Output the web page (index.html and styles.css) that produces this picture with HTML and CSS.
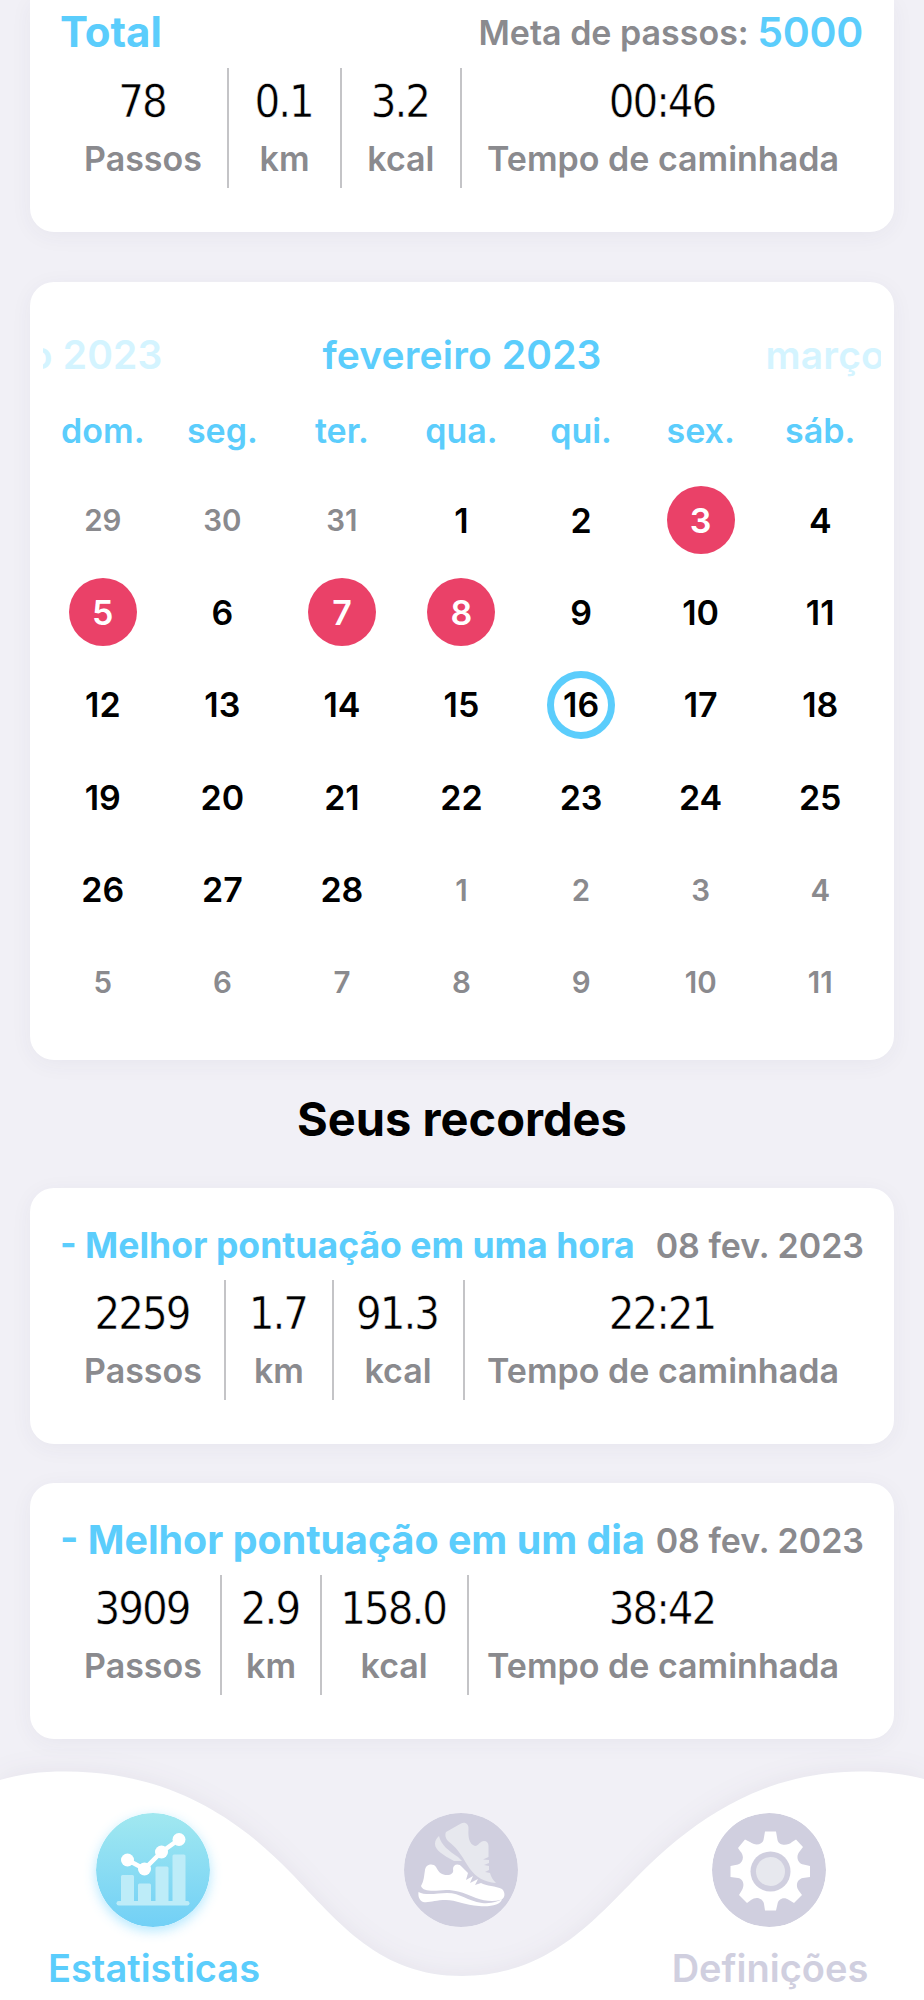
FILE: index.html
```html
<!DOCTYPE html>
<html lang="pt">
<head>
    <meta charset="UTF-8">
    <meta name="viewport" content="width=device-width, initial-scale=1.0">
    <title>Estatisticas</title>
    <link rel="stylesheet" href="styles.css">
</head>
<body>
    <main class="content">
        <section class="card total-card">
            <div class="card-header">
                <h2 class="card-title total-title">Total</h2>
                <p class="goal"><span class="goal-label">Meta de passos:</span> <span class="goal-value">5000</span></p>
            </div>
            <div class="stats">
                <div class="stat"><span class="value">78</span><span class="label">Passos</span></div>
                <div class="divider"></div>
                <div class="stat"><span class="value">0.1</span><span class="label">km</span></div>
                <div class="divider"></div>
                <div class="stat"><span class="value">3.2</span><span class="label">kcal</span></div>
                <div class="divider"></div>
                <div class="stat"><span class="value">00:46</span><span class="label">Tempo de caminhada</span></div>
            </div>
        </section>

        <section class="card calendar">
            <div class="months">
                <span class="month side prev">janeiro 2023</span>
                <span class="month">fevereiro 2023</span>
                <span class="month side next">março 2023</span>
            </div>
            <div class="weekdays">
                <span>dom.</span><span>seg.</span><span>ter.</span><span>qua.</span><span>qui.</span><span>sex.</span><span>sáb.</span>
            </div>
            <div class="days">
                <span class="day out">29</span><span class="day out">30</span><span class="day out">31</span><span class="day">1</span><span class="day">2</span><span class="day marked">3</span><span class="day">4</span>
                <span class="day marked">5</span><span class="day">6</span><span class="day marked">7</span><span class="day marked">8</span><span class="day">9</span><span class="day">10</span><span class="day">11</span>
                <span class="day">12</span><span class="day">13</span><span class="day">14</span><span class="day">15</span><span class="day today">16</span><span class="day">17</span><span class="day">18</span>
                <span class="day">19</span><span class="day">20</span><span class="day">21</span><span class="day">22</span><span class="day">23</span><span class="day">24</span><span class="day">25</span>
                <span class="day">26</span><span class="day">27</span><span class="day">28</span><span class="day out">1</span><span class="day out">2</span><span class="day out">3</span><span class="day out">4</span>
                <span class="day out">5</span><span class="day out">6</span><span class="day out">7</span><span class="day out">8</span><span class="day out">9</span><span class="day out">10</span><span class="day out">11</span>
            </div>
        </section>

        <h1 class="records-heading">Seus recordes</h1>

        <section class="card record-card">
            <div class="card-header">
                <h2 class="card-title hour-title">- Melhor pontuação em uma hora</h2>
                <span class="date">08 fev. 2023</span>
            </div>
            <div class="stats">
                <div class="stat"><span class="value">2259</span><span class="label">Passos</span></div>
                <div class="divider"></div>
                <div class="stat"><span class="value">1.7</span><span class="label">km</span></div>
                <div class="divider"></div>
                <div class="stat"><span class="value">91.3</span><span class="label">kcal</span></div>
                <div class="divider"></div>
                <div class="stat"><span class="value">22:21</span><span class="label">Tempo de caminhada</span></div>
            </div>
        </section>

        <section class="card record-card">
            <div class="card-header">
                <h2 class="card-title day-title">- Melhor pontuação em um dia</h2>
                <span class="date">08 fev. 2023</span>
            </div>
            <div class="stats">
                <div class="stat"><span class="value">3909</span><span class="label">Passos</span></div>
                <div class="divider"></div>
                <div class="stat"><span class="value">2.9</span><span class="label">km</span></div>
                <div class="divider"></div>
                <div class="stat"><span class="value">158.0</span><span class="label">kcal</span></div>
                <div class="divider"></div>
                <div class="stat"><span class="value">38:42</span><span class="label">Tempo de caminhada</span></div>
            </div>
        </section>
    </main>

    <nav class="tab-bar">
        <svg class="wave" viewBox="0 1760 924 240" width="924" height="240">
            <path fill="#fff" d="M0 1780C20 1774 40 1771.5 66 1771.5C170 1771.5 240 1820 290 1872C340 1924 380 1976 462 1976C544 1976 590 1925 632 1882C690 1822 760 1771.5 860 1771.5C885 1771.5 905 1774 924 1779V2000H0Z"/>
        </svg>
        <a class="tab active">
            <svg class="tab-icon" viewBox="0 0 114 114">
                <defs>
                    <linearGradient id="sky" x1="0" y1="0" x2="0" y2="1">
                        <stop offset="0" stop-color="#a1e8f0"/>
                        <stop offset="1" stop-color="#72d0f6"/>
                    </linearGradient>
                </defs>
                <circle cx="57" cy="57" r="57" fill="url(#sky)"/>
                <g fill="#bdecf8">
                    <rect x="25" y="62" width="13" height="28" rx="1.5"/>
                    <rect x="42" y="70.5" width="13" height="20" rx="1.5"/>
                    <rect x="59.5" y="53.5" width="13" height="37" rx="1.5"/>
                    <rect x="76.5" y="41.5" width="13" height="49" rx="1.5"/>
                    <rect x="20.5" y="88" width="73" height="4.5" rx="2.2"/>
                </g>
                <path d="M31.5 47L48.5 56L65.5 39L83 26.5" fill="none" stroke="#fff" stroke-width="4.5"/>
                <g fill="#fff">
                    <circle cx="31.5" cy="47" r="6.5"/>
                    <circle cx="48.5" cy="56" r="6.5"/>
                    <circle cx="65.5" cy="39" r="6.5"/>
                    <circle cx="83" cy="26.5" r="6.5"/>
                </g>
            </svg>
            <span class="tab-label">Estatisticas</span>
        </a>
        <a class="tab">
            <svg class="tab-icon" viewBox="0 0 114 114">
                <circle cx="57" cy="57" r="57" fill="#d0cfdf"/>
                <g fill="#e7e8ee">
                    <path d="M42 19L57 10.5C61 8.5 65 11 64.5 16C64 24 65 31 71 33C75 32.5 76 28 80 28C83 28 84.5 30 84.5 33V44L79 46.5L85 47V50L80 52L85 53V57L81 59L86 60C87 64 89 67 92 70C80 69 72 64 66 56C59 46 56 37 44 28C41 25 41 21 42 19Z"/>
                    <path d="M35 23C37 32 45 38 54 44L58 48L50 48C39 42 31 37 31 31C31 27 33 25 35 23Z"/>
                </g>
                <g fill="#fff">
                    <path d="M17 73C20 68 20 63 21 57C22 51 29 50 32 54C35 60 38 62 43 62C47 62 50 60 49 56C49 51 55 50 58 54L64 60L62 67L69 63L66 70L74 66L71 72L77 70C82 73 92 73 98 76C102 80 101 86 96 87C89 89 80 88 72 85C58 79 51 77 42 77C30 78 19 79 17 73Z"/>
                    <path d="M14.5 79C22 83 34 80 43 80C57 80 63 88 78 90C88 91 95 88 98 86C97 92 86 94 75 93C61 92 52 87 42 87C31 87 26 90 19 89C15 87 14 83 14.5 79Z"/>
                </g>
            </svg>
        </a>
        <a class="tab">
            <svg class="tab-icon" viewBox="0 0 114 114">
                <circle cx="57" cy="57" r="57" fill="#d0cfdf"/>
                <path fill="#fff" d="M53 18.5H64L65.5 27C67 33 76 33 80 29L84 26.5L91 34L88 38C83 43 86 51 91.5 51.5L98 53V64L91 65C85 66 83 73 87 78L90 82L82 90L77 87C72 83 66 86 65.5 91L64 97.5H53L52 91C51 85 44 83 39 87L35 90L27 82L30 77C33 71 31 66 26 65L18.5 64V53L26 51.5C31 50 33 43 28 38L26 35L33 26.5L38 29C43 33 50 32 51.5 27Z"/>
                <circle cx="58.5" cy="58.5" r="20" fill="#d0cfdf"/>
                <circle cx="58.5" cy="58.5" r="14.5" fill="#e7e8ee"/>
            </svg>
            <span class="tab-label">Definições</span>
        </a>
    </nav>
</body>
</html>
```

FILE: styles.css
```css
/* Basic reset */
* {
    margin: 0;
    padding: 0;
    box-sizing: border-box;
}

body {
    width: 924px;
    height: 2000px;
    overflow: hidden;
    display: flex;
    flex-direction: column;
    font-family: Inter, "Liberation Sans", sans-serif;
    background-color: #f1f0f6;
}

.content {
    flex: 1;
    padding: 0 30px;
}

/* Cards */
.card {
    background-color: #fff;
    border-radius: 24px;
    padding: 0 30px;
    box-shadow: 0 4px 22px rgba(60, 50, 90, 0.05);
}

.card-header {
    display: flex;
    justify-content: space-between;
    align-items: center;
    white-space: nowrap;
}

.card-title {
    color: #5bcdfc;
    font-weight: 700;
}

.total-card {
    height: 232px;
    border-radius: 0 0 24px 24px;
}

.total-card .card-header {
    height: 68px;
    align-items: baseline;
    padding-top: 6px;
}

.total-title {
    font-size: 42px;
}

.goal {
    color: #5bcdfc;
    font-size: 34px;
    font-weight: 600;
    padding-right: 1px;
}

.goal-label {
    color: #8a8a8e;
    vertical-align: 2px;
}

.goal-value {
    font-size: 41px;
    letter-spacing: -0.3px;
}

/* Stats row */
.stats {
    display: flex;
    justify-content: space-between;
    height: 120px;
    padding: 0 25px 0 24px;
}

.stat {
    display: flex;
    flex-direction: column;
    align-items: center;
    white-space: nowrap;
}

.value {
    font-family: "DejaVu Sans Condensed", "DejaVu Sans", sans-serif;
    font-stretch: condensed;
    font-size: 45px;
    line-height: 56px;
    letter-spacing: -2px;
    padding-top: 6px;
    padding-right: 2px;
    -webkit-text-stroke: 0.5px #fff;
}

.label {
    color: #8a8a8e;
    font-size: 34px;
    font-weight: 600;
    line-height: 40px;
    padding-top: 9px;
}

.divider {
    width: 2px;
    background-color: #c4c4c7;
}

/* Calendar */
.calendar {
    height: 778px;
    margin-top: 50px;
    padding: 46px 13px 0;
}

.months {
    display: flex;
    justify-content: center;
    align-items: center;
    gap: 164px;
    height: 52px;
    overflow: hidden;
    white-space: nowrap;
}

.month {
    color: #5bcdfc;
    font-size: 39px;
    font-weight: 600;
    letter-spacing: 0.15px;
}

.side {
    flex: 0 0 260px;
    color: #d4f4ff;
}

.prev {
    margin-right: -4px;
    margin-left: 4px;
    text-align: right;
}

.weekdays,
.days {
    display: grid;
    grid-template-columns: repeat(7, 1fr);
    justify-items: center;
    margin-right: 1px;
}

.weekdays {
    height: 106px;
    padding-top: 30px;
    color: #5bcdfc;
    font-size: 34px;
    font-weight: 600;
}

.days {
    row-gap: 24.4px;
}

.day {
    display: flex;
    justify-content: center;
    align-items: center;
    width: 68px;
    height: 68px;
    border-radius: 50%;
    font-size: 34px;
    font-weight: 600;
}

.out {
    color: #8a8a8e;
    font-size: 29.5px;
}

.marked {
    background-color: #ea4168;
    color: #fff;
}

.today {
    border: 7px solid #5bcdfc;
}

/* Records */
.records-heading {
    height: 128px;
    line-height: 118px;
    font-size: 47px;
    font-weight: 700;
    text-align: center;
}

.record-card {
    height: 256px;
    margin-bottom: 39px;
    padding-top: 22px;
}

.record-card:last-child {
    margin-bottom: 0;
}

.record-card .card-header {
    height: 70px;
}

.hour-title {
    font-size: 35.6px;
}

.day-title {
    font-size: 39.4px;
}

.date {
    color: #8a8a8e;
    font-size: 34px;
    font-weight: 600;
}

/* Bottom tabs */
.tab-bar {
    position: relative;
    display: grid;
    grid-template-columns: repeat(3, 308px);
    height: 240px;
    padding-top: 53px;
}

.wave {
    position: absolute;
    top: 0;
    left: 0;
    filter: drop-shadow(0 -2px 12px rgba(60, 50, 90, 0.06));
}

.tab {
    position: relative;
    display: flex;
    flex-direction: column;
    align-items: center;
    color: #d0cfdf;
}

.tab-icon {
    width: 114px;
    height: 114px;
    border-radius: 50%;
    margin-right: 2px;
}

.active {
    color: #5bcdfc;
}

.active .tab-icon {
    box-shadow: 0 4px 12px rgba(91, 205, 252, 0.45);
}

.tab-label {
    margin-top: 18px;
    font-size: 38px;
    font-weight: 600;
    line-height: 46px;
}
```
